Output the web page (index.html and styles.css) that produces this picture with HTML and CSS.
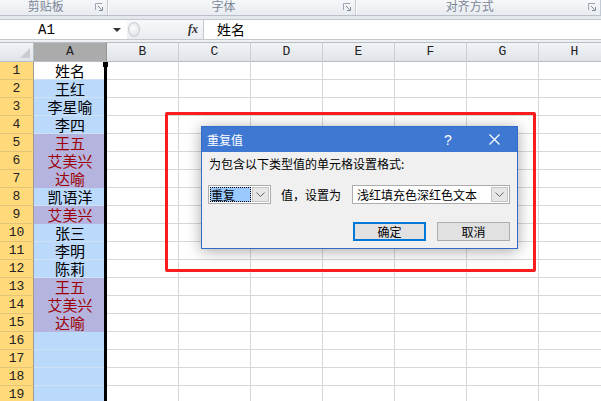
FILE: index.html
```html
<!DOCTYPE html>
<html lang="zh-CN">
<head>
    <meta charset="UTF-8">
    <meta name="viewport" content="width=device-width, initial-scale=1.0">
    <title>重复值</title>
    <link rel="stylesheet" href="styles.css">
</head>
<body>
    <div class="ribbon">
        <div class="group clipboard">
            <span class="group-label">剪贴板</span>
            <svg class="launcher" width="8" height="8" viewBox="0 0 8 8">
                <path d="M0.5 7V0.5H7" fill="none" stroke="#9aa4b2"/>
                <path d="M3 3l3.5 3.5M7.5 4v3.5H4" fill="none" stroke="#7d8896"/>
            </svg>
        </div>
        <div class="group font">
            <span class="group-label">字体</span>
            <svg class="launcher" width="8" height="8" viewBox="0 0 8 8">
                <path d="M0.5 7V0.5H7" fill="none" stroke="#9aa4b2"/>
                <path d="M3 3l3.5 3.5M7.5 4v3.5H4" fill="none" stroke="#7d8896"/>
            </svg>
        </div>
        <div class="group align">
            <span class="group-label">对齐方式</span>
            <svg class="launcher" width="8" height="8" viewBox="0 0 8 8">
                <path d="M0.5 7V0.5H7" fill="none" stroke="#9aa4b2"/>
                <path d="M3 3l3.5 3.5M7.5 4v3.5H4" fill="none" stroke="#7d8896"/>
            </svg>
        </div>
    </div>
    <div class="ribbon-gap"></div>

    <div class="formula-bar">
        <div class="name-box">
            <span class="ref">A1</span>
            <span class="caret"></span>
        </div>
        <div class="fx-area">
            <span class="grip"></span>
            <span class="fx">fx</span>
        </div>
        <div class="formula">姓名</div>
    </div>
    <div class="sheet-gap"></div>

    <div class="sheet">
        <div class="grid" id="grid"></div>
        <div class="sel-edge"></div>
        <div class="fill-handle"></div>
    </div>

    <div class="callout"></div>

    <div class="dialog">
        <div class="title-bar">
            <span class="title">重复值</span>
            <span class="help">?</span>
            <span class="close">
                <svg width="11" height="11" viewBox="0 0 11 11">
                    <path d="M0.5 0.5l10 10M10.5 0.5l-10 10" stroke="#fff" stroke-width="1.2"/>
                </svg>
            </span>
        </div>
        <div class="dialog-body">
            <div class="prompt">为包含以下类型值的单元格设置格式:</div>
            <div class="options">
                <div class="combo kind">
                    <span class="picked">重复</span>
                    <span class="drop">
                        <svg width="9" height="5" viewBox="0 0 9 5"><path d="M0.5 0.5l4 4 4-4" fill="none" stroke="#606060"/></svg>
                    </span>
                </div>
                <span class="options-label">值，设置为</span>
                <div class="combo style">
                    <span class="value">浅红填充色深红色文本</span>
                    <span class="drop">
                        <svg width="9" height="5" viewBox="0 0 9 5"><path d="M0.5 0.5l4 4 4-4" fill="none" stroke="#606060"/></svg>
                    </span>
                </div>
            </div>
            <div class="buttons">
                <button class="default">确定</button>
                <button>取消</button>
            </div>
        </div>
    </div>

    <script>
        const jména = ['姓名', '王红', '李星喻', '李四', '王五', '艾美兴', '达喻', '凯语洋', '艾美兴',
            '张三', '李明', '陈莉', '王五', '艾美兴', '达喻', '', '', '', ''];
        const duplicitní = [5, 6, 7, 9, 13, 14, 15];
        const sloupce = ['A', 'B', 'C', 'D', 'E', 'F', 'G', 'H'];

        function přidej(grid, třída, text) {
            const el = document.createElement('div');
            el.className = třída;
            el.textContent = text || '';
            grid.appendChild(el);
        }

        function vykresliList() {
            const grid = document.getElementById('grid');
            přidej(grid, 'col-head corner');
            sloupce.forEach((s, i) => přidej(grid, i === 0 ? 'col-head active' : 'col-head', s));

            jména.forEach((jméno, index) => {
                const řádek = index + 1;
                přidej(grid, 'row-head', řádek);
                let třída = 'cell name';
                if (řádek === 1) třída += ' current';
                if (duplicitní.includes(řádek)) třída += ' dup';
                přidej(grid, třída, jméno);
                for (let i = 1; i < sloupce.length; i++) přidej(grid, 'cell');
            });
        }

        vykresliList();
    </script>
</body>
</html>
```

FILE: styles.css
```css
body {
    margin: 0;
    width: 601px;
    height: 401px;
    overflow: hidden;
    position: relative;
    background-color: #fff;
    font-family: "Noto Sans CJK SC", sans-serif;
}

/* ribbon group captions */
.ribbon {
    display: flex;
    height: 15px;
    border-bottom: 1px solid #b9c0ca;
    background: linear-gradient(#f6f7f9, #e8ebef);
}

.group {
    display: flex;
    align-items: flex-start;
    border-right: 1px solid #c4cad2;
    box-shadow: 1px 0 0 #fafbfc;
}

.clipboard { width: 110px; }
.font { width: 252px; }
.align { width: 250px; }

.group-label {
    flex: 1;
    text-align: center;
    font-size: 12px;
    line-height: 12px;
    color: #7a8698;
}

.launcher {
    margin: 3px 4px 0 4px;
}

.ribbon-gap {
    height: 3px;
    background-color: #e4e8ed;
}

/* formula bar */
.formula-bar {
    display: flex;
    height: 19px;
    border-top: 1px solid #c3c8cf;
    border-bottom: 1px solid #c3c8cf;
}

.name-box {
    width: 127px;
    display: flex;
    align-items: center;
    background-color: #fff;
}

.ref {
    flex: 1;
    padding-right: 20px;
    text-align: center;
    font: 14px "Liberation Mono", monospace;
}

.caret {
    width: 0;
    height: 0;
    margin-right: 6px;
    border-left: 4px solid transparent;
    border-right: 4px solid transparent;
    border-top: 4px solid #333;
}

.fx-area {
    width: 76px;
    display: flex;
    align-items: center;
    background: linear-gradient(#f7f8fa, #e9ecf0);
}

.grip {
    width: 12px;
    height: 15px;
    margin-left: 1px;
    border: 1px solid #c9cdd3;
    border-radius: 50%;
    background: radial-gradient(circle at 40% 40%, #fdfdfd, #d8dbe0);
    box-sizing: border-box;
}

.fx {
    margin-left: auto;
    margin-right: 5px;
    font: italic bold 12px "Liberation Serif", serif;
    color: #333;
}

.formula {
    flex: 1;
    padding-left: 13px;
    border-left: 1px solid #c3c8cf;
    background-color: #fff;
    font-size: 14px;
    line-height: 19px;
}

.sheet-gap {
    height: 2px;
    background-color: #eef0f3;
}

/* worksheet grid */
.sheet {
    position: relative;
}

.grid {
    display: grid;
    grid-template-columns: 34px 73px repeat(7, 72px);
    grid-template-rows: 20px;
    grid-auto-rows: 18px;
}

.grid > div {
    box-sizing: border-box;
    overflow: hidden;
    white-space: nowrap;
}

.col-head {
    border-top: 1px solid #b7bdc6;
    border-bottom: 1px solid #b7bdc6;
    border-right: 1px solid #c9ced5;
    background: linear-gradient(#f1f3f5, #e0e4e9);
    text-align: center;
    font: 13px/18px "Liberation Mono", monospace;
    color: #222;
}

.col-head.active {
    background: #ababab;
    border-right-color: #949494;
}

.corner {
    position: relative;
    border-right-color: #b7bdc6;
}

.corner::after {
    content: "";
    position: absolute;
    right: 3px;
    bottom: 3px;
    border-left: 10px solid transparent;
    border-bottom: 10px solid #c9cdd3;
}

.row-head {
    border-bottom: 1px solid #e2c47a;
    border-right: 1px solid #9a9a9a;
    background-color: #ffd97a;
    text-align: center;
    font: 13px/17px "Liberation Mono", monospace;
    color: #222;
}

.cell {
    border-right: 1px solid #d7d7d7;
    border-bottom: 1px solid #d7d7d7;
}

.cell.name {
    background-color: #bad9fb;
    border-bottom-color: #cde1f6;
    text-align: center;
    font-size: 15px;
    line-height: 17px;
}

.cell.name.dup {
    background-color: #b4b4de;
    border-bottom-color: #b4b4de;
    color: #9c0006;
}

.cell.name.current {
    background-color: #fff;
}

.sel-edge {
    position: absolute;
    left: 104px;
    top: 20px;
    bottom: 0;
    width: 3px;
    background-color: #000;
}

.fill-handle {
    position: absolute;
    left: 103px;
    top: 20px;
    width: 5px;
    height: 5px;
    background-color: #000;
}

/* red outline round the dialog */
.callout {
    position: absolute;
    left: 165px;
    top: 112px;
    width: 371px;
    height: 160px;
    box-sizing: border-box;
    border: 3px solid #fb1d1d;
    border-radius: 2px;
}

/* duplicate values dialog */
.dialog {
    position: absolute;
    left: 201px;
    top: 126px;
    width: 317px;
    height: 123px;
    box-sizing: border-box;
    border: 1px solid #2f6dc8;
    background-color: #f0f0f0;
    box-shadow: 0 2px 14px rgba(0, 0, 0, 0.35);
    font-size: 12px;
    color: #000;
}

.title-bar {
    display: flex;
    align-items: center;
    height: 25px;
    padding-left: 5px;
    background-color: #3e78d2;
    color: #fff;
}

.title {
    flex: 1;
}

.help {
    width: 46px;
    text-align: center;
    font: 14px "Liberation Sans", sans-serif;
}

.close {
    width: 46px;
    display: flex;
    justify-content: center;
}

.dialog-body {
    padding: 4px 7px 0 6px;
}

.prompt {
    padding-left: 1px;
    line-height: 16px;
}

.options {
    display: flex;
    align-items: center;
    margin-top: 13px;
}

.combo {
    display: flex;
    align-items: center;
    height: 19px;
    padding: 1px;
    box-sizing: border-box;
    border: 1px solid #acacac;
    background-color: #fff;
}

.combo.kind { width: 63px; }
.combo.style { width: 158px; }

.picked {
    flex: 1;
    height: 15px;
    box-sizing: border-box;
    border: 1px dotted #000;
    background-color: #99c9ff;
    line-height: 13px;
}

.value {
    flex: 1;
    padding-left: 3px;
    line-height: 15px;
}

.drop {
    width: 17px;
    height: 15px;
    margin-left: 1px;
    display: flex;
    align-items: center;
    justify-content: center;
    box-sizing: border-box;
    border: 1px solid #c4c4c4;
    background-color: #e6e6e6;
}

.options-label {
    margin: 0 11px 0 10px;
}

.buttons {
    display: flex;
    justify-content: flex-end;
    gap: 11px;
    margin-top: 18px;
}

button {
    width: 73px;
    height: 19px;
    padding: 0;
    box-sizing: border-box;
    border: 1px solid #adadad;
    background-color: #e1e1e1;
    font-family: "Noto Sans CJK SC", sans-serif;
    font-size: 12px;
    line-height: 15px;
    color: #000;
}

button.default {
    border: 2px solid #0078d7;
}
```
